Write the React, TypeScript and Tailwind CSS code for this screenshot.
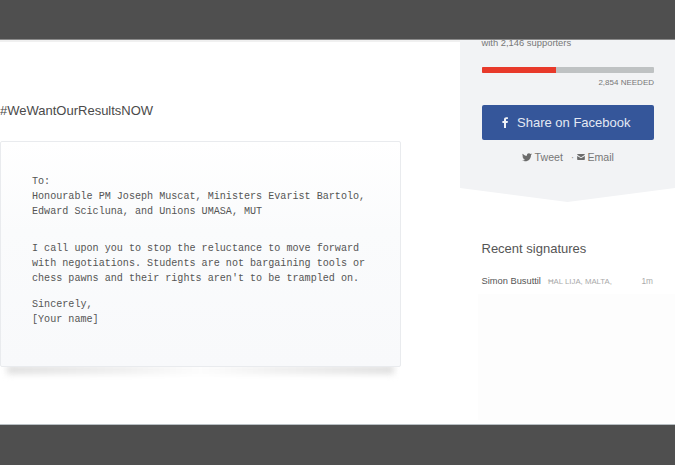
import React from "react";

const App = () => {
  return (
    <div className="w-[675px] h-[465px] overflow-hidden bg-white flex flex-col font-['Liberation_Sans',Arial,sans-serif]">
      <div className="h-10 shrink-0 bg-[#4f4f4f] border-b border-[#8a8a8a]" />
      <div className="flex-1 flex min-h-0">
        <div className="w-[460px] shrink-0 flex flex-col">
          <div className="h-[2px] bg-[#f0f0f0]" />
          <h1 className="mt-[60px] h-[18px] text-[13px] leading-[18px] text-[#4a4a4a]">#WeWantOurResultsNOW</h1>
          <div className="relative mt-[21px] w-[401px]">
            <div className="absolute left-[7px] right-[7px] bottom-[-7px] h-[9px] bg-[linear-gradient(90deg,#dedede_0%,#eeeeee_30%,#fcfcfc_50%,#eeeeee_70%,#dedede_100%)] blur-[3px]" />
            <div className="relative h-[226px] rounded-[2px] border border-[#e9ebee] bg-[linear-gradient(180deg,#ffffff_0%,#fafbfc_40%,#f8f9fb_100%)] pl-[31px] pt-[32px] font-['Liberation_Mono',monospace] text-[10.1px] leading-[15px] text-[#555]">
              <p>To:</p>
              <p>Honourable PM Joseph Muscat, Ministers Evarist Bartolo,</p>
              <p>Edward Scicluna, and Unions UMASA, MUT</p>
              <p className="mt-[22px]">I call upon you to stop the reluctance to move forward</p>
              <p>with negotiations. Students are not bargaining tools or</p>
              <p>chess pawns and their rights aren't to be trampled on.</p>
              <p className="mt-[11px]">Sincerely,</p>
              <p>[Your name]</p>
            </div>
          </div>
        </div>

        <div className="w-[215px] shrink-0 flex flex-col">
          <div className="h-[162px] bg-[#f2f3f5] [clip-path:polygon(0_0,100%_0,100%_148px,50%_100%,0_148px)] pl-[21.5px] pr-[21px]">
            <p className="text-[9.4px] leading-[12px] mt-[-3px] text-[#777]">with 2,146 supporters</p>
            <div className="mt-[18px] h-[6px] rounded-[1px] bg-[#bfc2c3] overflow-hidden">
              <div className="h-full w-[43%] bg-[#e8392a]" />
            </div>
            <p className="mt-[4px] text-right text-[8px] leading-[11px] text-[#777]">2,854 NEEDED</p>
            <button className="mt-[17px] w-full h-[35px] rounded-[2px] bg-[#35569a] flex items-center justify-center gap-[8px] pr-[3px] text-[13px] text-[#e4e9f3]">
              <svg width="7" height="11" viewBox="0 0 7 11" fill="#f0f3f8"><path d="M2 11V6H.4V4H2V2.6C2 1 3 .2 4.4.2c.7 0 1.2 0 1.5.1v1.7h-1c-.7 0-.9.4-.9.9V4h1.900l-.3 2H4v5H2z" /></svg>
              Share on Facebook
            </button>
            <div className="mt-[10px] flex items-center justify-center text-[10.6px] leading-[14px] text-[#777]">
              <svg width="10" height="9" viewBox="0 0 24 20" fill="#6b6b6b"><path d="M24 2.400c-.9.400-1.800.700-2.800.800 1-.6 1.800-1.600 2.200-2.700-1 .6-2 1-3.100 1.200C19.300.7 18 0 16.600 0c-2.700 0-4.900 2.200-4.900 4.900 0 .4 0 .8.100 1.100C7.700 5.800 4.100 3.900 1.700.9c-.4.700-.7 1.600-.7 2.500 0 1.700.9 3.200 2.200 4.100-.8 0-1.600-.2-2.200-.6v.1c0 2.400 1.700 4.400 3.900 4.800-.4.100-.8.200-1.300.2-.3 0-.6 0-.9-.1.600 2 2.400 3.400 4.600 3.400-1.700 1.300-3.800 2.100-6.100 2.100-.4 0-.8 0-1.200-.1C2.200 18.300 4.800 19 7.500 19c9.100 0 14-7.500 14-14v-.6c1-.7 1.800-1.500 2.500-2z" /></svg>
              <span className="ml-[3px]">Tweet</span>
              <span className="ml-[8px] text-[#999]">·</span>
              <svg className="ml-[3px]" width="8" height="6" viewBox="0 0 18 14" fill="#6b6b6b"><path d="M0 2c0-1 1-2 2-2h14c1 0 2 1 2 2L9 7.500 0 2zm0 2.500V12c0 1 1 2 2 2h14c1 0 2-1 2-2V4.500L9 10 0 4.500z" /></svg>
              <span className="ml-[2px]">Email</span>
            </div>
          </div>
          <h2 className="mt-[38px] pl-[21.5px] text-[13px] leading-[18px] text-[#555]">Recent signatures</h2>
          <div className="mt-[16px] pl-[21.5px] pr-[22px] flex items-baseline h-[14px] leading-[14px]">
            <span className="text-[9.3px] text-[#555]">Simon Busuttil</span>
            <span className="ml-[7px] text-[7.8px] text-[#aaa]">ĦAL LIJA, MALTA,</span>
            <span className="ml-auto text-[8.3px] text-[#aaa]">1m</span>
          </div>
          <div className="mt-[6px] ml-[18px] h-[126px] bg-[#fdfdfd]" />
        </div>
      </div>
      <div className="h-[41px] shrink-0 bg-[#4f4f4f] border-t border-[#b9c0c4]" />
    </div>
  );
};

export default App;
